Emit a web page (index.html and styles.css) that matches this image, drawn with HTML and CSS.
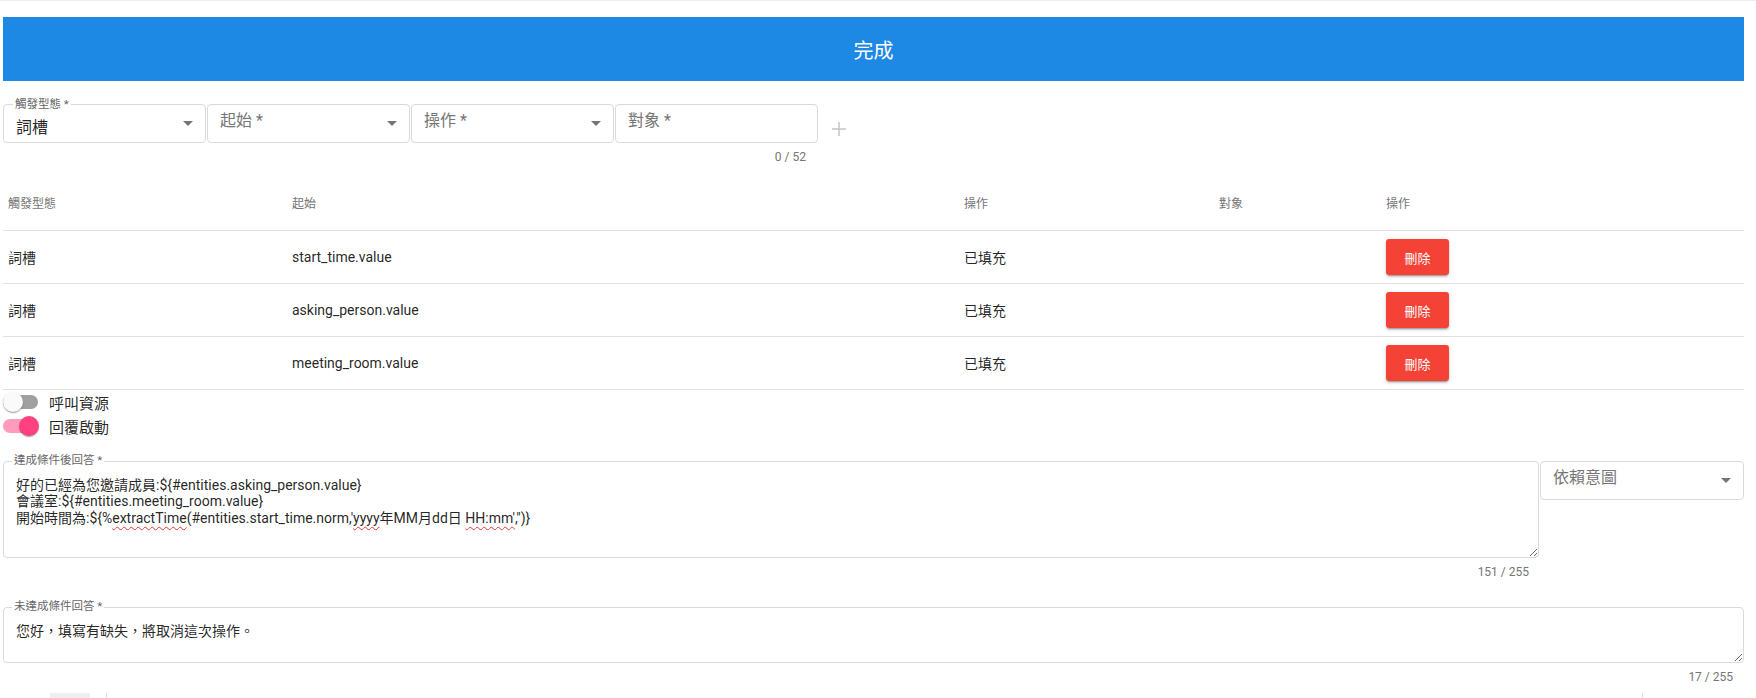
FILE: index.html
```html
<!DOCTYPE html>
<html lang="zh-Hant">
<head>
<meta charset="utf-8">
<title>回覆設定</title>
<link rel="stylesheet" href="styles.css">
</head>
<body>
<div class="page">
  <button class="done-btn" type="button">完成</button>

  <div class="cond-row">
    <div class="field">
      <div class="box">
        <span class="float-label">觸發型態 *</span>
        <span class="value">詞槽</span>
        <span class="caret"></span>
      </div>
    </div>
    <div class="field">
      <div class="box">
        <span class="placeholder">起始 *</span>
        <span class="caret"></span>
      </div>
    </div>
    <div class="field">
      <div class="box">
        <span class="placeholder">操作 *</span>
        <span class="caret"></span>
      </div>
    </div>
    <div class="field">
      <div class="box">
        <span class="placeholder">對象 *</span>
      </div>
      <div class="hint">0 / 52</div>
    </div>
    <button class="add-btn" type="button" aria-label="新增">
      <svg width="24" height="24" viewBox="0 0 24 24"><path d="M12 5v14M5 12h14" stroke="#c4c4c4" stroke-width="1.5" fill="none"/></svg>
    </button>
  </div>

  <div class="table">
    <div class="tr th">
      <div class="cell">觸發型態</div>
      <div class="cell">起始</div>
      <div class="cell">操作</div>
      <div class="cell">對象</div>
      <div class="cell">操作</div>
    </div>
    <div class="tr td">
      <div class="cell">詞槽</div>
      <div class="cell">start_time.value</div>
      <div class="cell">已填充</div>
      <div class="cell"></div>
      <div class="cell"><button class="del-btn" type="button">刪除</button></div>
    </div>
    <div class="tr td">
      <div class="cell">詞槽</div>
      <div class="cell">asking_person.value</div>
      <div class="cell">已填充</div>
      <div class="cell"></div>
      <div class="cell"><button class="del-btn" type="button">刪除</button></div>
    </div>
    <div class="tr td">
      <div class="cell">詞槽</div>
      <div class="cell">meeting_room.value</div>
      <div class="cell">已填充</div>
      <div class="cell"></div>
      <div class="cell"><button class="del-btn" type="button">刪除</button></div>
    </div>
  </div>

  <div class="switches">
    <div class="switch-row">
      <span class="sw"><span class="track"></span><span class="thumb"></span></span>
      <span class="sw-label">呼叫資源</span>
    </div>
    <div class="switch-row">
      <span class="sw on"><span class="track"></span><span class="thumb"></span></span>
      <span class="sw-label">回覆啟動</span>
    </div>
  </div>

  <div class="reply-row">
    <div class="ta-col">
      <div class="ta-field">
        <span class="float-label">達成條件後回答 *</span>
        <div class="ta-box ta-1">
          <div>好的已經為您邀請成員:${#entities.asking_person.value}</div>
          <div>會議室:${#entities.meeting_room.value}</div>
          <div>開始時間為:${%<span class="sq">extractTime</span>(#entities.start_time.norm,'<span class="sq">yyyy</span>年MM月dd日 <span class="sq">HH:mm'</span>,'')}</div>
        </div>
      </div>
      <div class="counter">151 / 255</div>
    </div>
    <div class="select">
      <div class="box">
        <span class="placeholder">依賴意圖</span>
        <span class="caret"></span>
      </div>
    </div>
  </div>

  <div class="ta-block">
    <div class="ta-field">
      <span class="float-label">未達成條件回答 *</span>
      <textarea class="ta-box ta-2" readonly>您好，填寫有缺失，將取消這次操作。</textarea>
    </div>
    <div class="counter c2">17 / 255</div>
  </div>

  <div class="next-row">
    <span class="chip"></span>
    <span class="vline"></span>
    <span class="spacer"></span>
    <span class="vline"></span>
  </div>
</div>
</body>
</html>
```

FILE: styles.css
```css
* {
  box-sizing: border-box;
}

html,
body {
  margin: 0;
  background: #ffffff;
}

body {
  height: 698px;
  overflow: hidden;
  border-top: 1px solid #ececec;
  font-family: Roboto, "Noto Sans CJK TC", sans-serif;
  color: rgba(0, 0, 0, 0.87);
}

.page {
  padding: 16px 12px 0 3px;
}

.done-btn {
  display: flex;
  align-items: center;
  justify-content: center;
  width: 100%;
  height: 64px;
  margin: 0;
  padding: 0;
  border: 0;
  background: #1e88e5;
  color: #ffffff;
  font-family: Roboto, "Noto Sans CJK TC", sans-serif;
  font-size: 20px;
}

/* condition inputs */
.cond-row {
  display: flex;
  align-items: flex-start;
  gap: 1px;
  margin-top: 23px;
}

.field {
  width: 203px;
}

.box {
  position: relative;
  display: flex;
  align-items: flex-start;
  height: 39px;
  padding: 0 12px;
  border: 1px solid #dadada;
  border-radius: 4px;
  background: #fff;
}

.float-label {
  position: absolute;
  top: -8px;
  left: 9px;
  padding: 0 2px;
  background: #ffffff;
  color: #666666;
  font-size: 11.5px;
  line-height: 14px;
  white-space: nowrap;
  z-index: 1;
}

.value {
  margin-top: 13px;
  font-size: 16px;
  line-height: 20px;
  color: rgba(0, 0, 0, 0.87);
}

.placeholder {
  margin-top: 6px;
  font-size: 16px;
  line-height: 20px;
  color: #757575;
}

.caret {
  width: 0;
  height: 0;
  margin-left: auto;
  margin-top: 16px;
  border-left: 5px solid transparent;
  border-right: 5px solid transparent;
  border-top: 5px solid #757575;
}

.hint {
  margin-top: 7px;
  padding-right: 12px;
  text-align: right;
  font-size: 12px;
  line-height: 14px;
  color: #757575;
}

.add-btn {
  width: 24px;
  height: 24px;
  margin: 13px 0 0 8px;
  padding: 0;
  border: 0;
  background: none;
}

.add-btn svg {
  display: block;
}

/* table */
.table {
  margin-top: 10px;
}

.tr {
  display: grid;
  grid-template-columns: 284px 672px 255px 167px 1fr;
  align-items: center;
  border-bottom: 1px solid #e0e0e0;
}

.cell {
  padding-left: 5px;
  white-space: nowrap;
}

.th {
  height: 57px;
  font-size: 12px;
  color: #757575;
}

.td {
  height: 53px;
  font-size: 14px;
  color: rgba(0, 0, 0, 0.87);
}

.del-btn {
  display: block;
  width: 63px;
  height: 36px;
  padding: 0;
  border: 0;
  border-radius: 3px;
  background: #f44336;
  color: #ffffff;
  font-family: Roboto, "Noto Sans CJK TC", sans-serif;
  font-size: 13px;
  box-shadow: 0 3px 1px -2px rgba(0, 0, 0, 0.2), 0 2px 2px 0 rgba(0, 0, 0, 0.14), 0 1px 5px 0 rgba(0, 0, 0, 0.12);
}

/* switches */
.switch-row {
  display: flex;
  align-items: center;
  height: 24px;
}

.sw {
  position: relative;
  width: 36px;
  height: 20px;
  flex: none;
}

.track {
  position: absolute;
  left: 0;
  top: 3px;
  width: 35px;
  height: 14px;
  border-radius: 7px;
  background: #a0a0a0;
}

.thumb {
  position: absolute;
  left: 0;
  top: 0;
  width: 20px;
  height: 20px;
  border-radius: 50%;
  background: #fafafa;
  box-shadow: 0 2px 1px -1px rgba(0, 0, 0, 0.2), 0 1px 1px 0 rgba(0, 0, 0, 0.14), 0 1px 3px 0 rgba(0, 0, 0, 0.12);
}

.sw.on .track {
  background: #ff9cbe;
}

.sw.on .thumb {
  left: 16px;
  background: #ff4081;
}

.sw-label {
  margin-left: 10px;
  font-size: 15px;
  color: rgba(0, 0, 0, 0.87);
}

/* reply textareas */
.reply-row {
  display: flex;
  align-items: flex-start;
  gap: 1px;
  margin-top: 23px;
}

.ta-col {
  flex: 1;
}

.ta-field {
  position: relative;
}

.ta-box {
  display: block;
  width: 100%;
  margin: 0;
  padding: 15px 12px 0;
  border: 1px solid #dadada;
  border-radius: 4px;
  background: #ffffff;
  font-family: Roboto, "Noto Sans CJK TC", sans-serif;
  font-size: 14px;
  line-height: 16.4px;
  color: rgba(0, 0, 0, 0.87);
  resize: vertical;
  overflow: auto;
  outline: none;
}

.ta-1 {
  height: 97px;
  white-space: nowrap;
}

.ta-2 {
  height: 56px;
}

.sq {
  text-decoration: underline wavy #e53935;
  text-decoration-thickness: 1px;
  text-underline-offset: 3px;
  text-decoration-skip-ink: none;
}

.counter {
  margin-top: 7px;
  padding-right: 10px;
  text-align: right;
  font-size: 12px;
  line-height: 14px;
  color: #757575;
}

.counter.c2 {
  padding-right: 11px;
}

.select {
  width: 204px;
}

.ta-block {
  margin-top: 28px;
}

/* cut-off next row */
.next-row {
  display: flex;
  align-items: flex-start;
  height: 30px;
  margin-top: 9px;
}

.chip {
  width: 40px;
  height: 30px;
  margin-left: 47px;
  background: #eeeeee;
}

.vline {
  width: 1px;
  height: 30px;
  margin-left: 16px;
  background: #dddddd;
}

.spacer {
  width: 1519px;
}
```
